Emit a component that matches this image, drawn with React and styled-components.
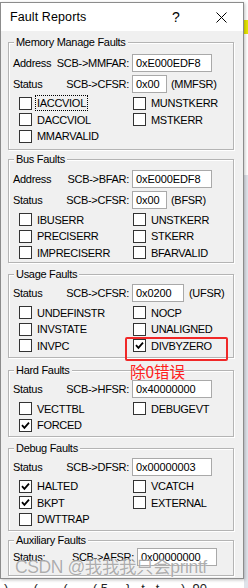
import React from 'react';
import styled, { createGlobalStyle } from 'styled-components';

const GlobalStyle = createGlobalStyle`
  html, body {
    margin: 0;
    padding: 0;
    background: #ffffff;
  }
  body {
    font-family: "Liberation Sans", Arial, sans-serif;
  }
`;

const Page = styled.div`
  position: relative;
  width: 248px;
  height: 588px;
  overflow: hidden;
  background: #ffffff;
`;

const Window = styled.div`
  position: relative;
  margin-top: 2px;
  width: 244px;
  height: 577px;
  box-sizing: border-box;
  border: 1px solid #8c8c8c;
  background: #f0f0f0;
  overflow: hidden;
  box-shadow: 1px 1px 3px rgba(0, 0, 0, 0.25);
`;

const TitleBar = styled.div`
  display: flex;
  align-items: center;
  height: 28px;
  padding-left: 9px;
  background: #ffffff;
  color: #000;
`;

const TitleText = styled.div`
  flex: 1;
  font-size: 12.5px;
  letter-spacing: 0.1px;
`;

const HelpGlyph = styled.div`
  width: 20px;
  font-size: 14px;
  text-align: center;
  margin-right: 25px;
`;

const CloseGlyph = styled.div`
  display: flex;
  align-items: center;
  justify-content: center;
  width: 20px;
  margin-right: 12px;
`;

const Body = styled.div`
  padding: 0 9px 0 7px;
  font-size: 11px;
  letter-spacing: -0.3px;
  color: #000;
`;

const Group = styled.div`
  position: relative;
  margin-top: ${({ $mt }) => $mt}px;
  padding: ${({ $pt }) => $pt}px 0 ${({ $pb }) => $pb}px 4px;
  border: 1px solid #b4b4b4;
  box-shadow: 1px 1px 0 #ffffff, inset 1px 1px 0 #ffffff;
`;

const GroupTitle = styled.span`
  position: absolute;
  top: -7px;
  left: 5px;
  padding: 0 2px;
  line-height: 13px;
  background: #f0f0f0;
`;

const FieldRow = styled.div`
  display: flex;
  align-items: center;
  height: 21px;
`;

const FieldLabels = styled.div`
  display: flex;
  justify-content: space-between;
  width: ${({ $w }) => $w}px;
  margin-right: 3px;
`;

const Input = styled.div`
  box-sizing: border-box;
  width: ${({ $w }) => $w}px;
  height: 18px;
  padding-left: 3px;
  line-height: 16px;
  border: 1px solid #a9a9a9;
  background: #ffffff;
  letter-spacing: -0.1px;
`;

const Suffix = styled.span`
  margin-left: ${({ $ml }) => $ml || 4}px;
`;

const CheckGrid = styled.div`
  display: grid;
  grid-template-columns: 114px 1fr;
  grid-auto-rows: 16.5px;
  padding-left: 6px;
  margin-top: 1px;
`;

const CheckItem = styled.div`
  display: flex;
  align-items: center;
`;

const Box = styled.span`
  display: flex;
  align-items: center;
  justify-content: center;
  box-sizing: border-box;
  width: 13px;
  height: 13px;
  margin-right: 5px;
  border: 1px solid #333333;
  background: #ffffff;
`;

const CheckLabel = styled.span`
  outline: ${({ $focus }) => ($focus ? '1px dotted #000' : 'none')};
  outline-offset: 1px;
`;

const Highlight = styled.div`
  position: absolute;
  left: 125px;
  top: 337px;
  width: 103px;
  height: 24px;
  box-sizing: border-box;
  border: 2px solid #f02828;
  border-radius: 2px;
`;

const Note = styled.div`
  position: absolute;
  left: 130px;
  top: 362px;
  font-family: "Noto Sans CJK SC", sans-serif;
  font-size: 15.5px;
  line-height: 18px;
  color: #ff2020;
`;

const Watermark = styled.div`
  position: absolute;
  left: 15px;
  top: 556px;
  font-family: "Liberation Sans", "Noto Sans CJK SC", sans-serif;
  font-size: 17.5px;
  line-height: 22px;
  letter-spacing: -0.4px;
  color: rgba(120, 120, 120, 0.6);
  text-shadow: 0 0 1px rgba(255, 255, 255, 0.9);
`;

const BehindText = styled.div`
  position: absolute;
  left: 4px;
  top: 581px;
  font-family: "Liberation Sans", sans-serif;
  font-size: 13px;
  line-height: 16px;
  color: #222;
  white-space: pre;
`;

const EdgeMark = styled.div`
  position: absolute;
  left: 244px;
  top: ${({ $top }) => $top}px;
  width: 4px;
  height: ${({ $h }) => $h}px;
  background: ${({ $bg }) => $bg};
`;

const Check = ({ label, checked, focus }) => (
  <CheckItem>
    <Box>
      {checked && (
        <svg width="9" height="9" viewBox="0 0 9 9">
          <polyline points="1,4.2 3.4,6.8 8,1.6" fill="none" stroke="#000" strokeWidth="1.8" />
        </svg>
      )}
    </Box>
    <CheckLabel $focus={focus}>{label}</CheckLabel>
  </CheckItem>
);

const Field = ({ name, reg, value, width, suffix, suffixGap, labelWidth = 116 }) => (
  <FieldRow>
    <FieldLabels $w={labelWidth}>
      <span>{name}</span>
      <span>{reg}</span>
    </FieldLabels>
    <Input $w={width}>{value}</Input>
    {suffix && <Suffix $ml={suffixGap}>{suffix}</Suffix>}
  </FieldRow>
);

const App = () => (
  <Page>
    <GlobalStyle />
    <EdgeMark $top={20} $h={14} $bg="#e6e600" />
    <EdgeMark $top={175} $h={413} $bg="#dfe3ea" />
    <Window>
      <TitleBar>
        <TitleText>Fault Reports</TitleText>
        <HelpGlyph>?</HelpGlyph>
        <CloseGlyph>
          <svg width="11" height="11" viewBox="0 0 11 11">
            <path d="M0.5 0.5 L10.5 10.5 M10.5 0.5 L0.5 10.5" stroke="#000" strokeWidth="1" />
          </svg>
        </CloseGlyph>
      </TitleBar>
      <Body>
        <Group $mt={11} $pt={9} $pb={4}>
          <GroupTitle>Memory Manage Faults</GroupTitle>
          <Field name="Address" reg="SCB->MMFAR:" value="0xE000EDF8" width={80} />
          <Field name="Status" reg="SCB->CFSR:" value="0x00" width={35} suffix="(MMFSR)" />
          <CheckGrid>
            <Check label="IACCVIOL" focus />
            <Check label="MUNSTKERR" />
            <Check label="DACCVIOL" />
            <Check label="MSTKERR" />
            <Check label="MMARVALID" />
          </CheckGrid>
        </Group>

        <Group $mt={9} $pt={9} $pb={1}>
          <GroupTitle>Bus Faults</GroupTitle>
          <Field name="Address" reg="SCB->BFAR:" value="0xE000EDF8" width={80} />
          <Field name="Status" reg="SCB->CFSR:" value="0x00" width={35} suffix="(BFSR)" />
          <CheckGrid>
            <Check label="IBUSERR" />
            <Check label="UNSTKERR" />
            <Check label="PRECISERR" />
            <Check label="STKERR" />
            <Check label="IMPRECISERR" />
            <Check label="BFARVALID" />
          </CheckGrid>
        </Group>

        <Group $mt={11} $pt={7.5} $pb={3}>
          <GroupTitle>Usage Faults</GroupTitle>
          <Field name="Status" reg="SCB->CFSR:" value="0x0200" width={52} suffix="(UFSR)" suffixGap={5} />
          <CheckGrid>
            <Check label="UNDEFINSTR" />
            <Check label="NOCP" />
            <Check label="INVSTATE" />
            <Check label="UNALIGNED" />
            <Check label="INVPC" />
            <Check label="DIVBYZERO" checked />
          </CheckGrid>
        </Group>

        <Group $mt={12} $pt={7.5} $pb={2.5}>
          <GroupTitle>Hard Faults</GroupTitle>
          <Field name="Status" reg="SCB->HFSR:" value="0x40000000" width={80} />
          <CheckGrid>
            <Check label="VECTTBL" />
            <Check label="DEBUGEVT" />
            <Check label="FORCED" checked />
          </CheckGrid>
        </Group>

        <Group $mt={11} $pt={7} $pb={2.5}>
          <GroupTitle>Debug Faults</GroupTitle>
          <Field name="Status" reg="SCB->DFSR:" value="0x00000003" width={80} />
          <CheckGrid>
            <Check label="HALTED" checked />
            <Check label="VCATCH" />
            <Check label="BKPT" checked />
            <Check label="EXTERNAL" />
            <Check label="DWTTRAP" />
          </CheckGrid>
        </Group>

        <Group $mt={9} $pt={5} $pb={8}>
          <GroupTitle>Auxiliary Faults</GroupTitle>
          <Field name="Status:" reg="SCB->AFSR:" value="0x00000000" width={80} labelWidth={121} />
        </Group>
      </Body>
    </Window>
    <Highlight />
    <Note>除0错误</Note>
    <Watermark>CSDN @我我我只会printf</Watermark>
    <BehindText>{')       (       (       ( 5     }   t   t      )  90'}</BehindText>
  </Page>
);

export default App;
